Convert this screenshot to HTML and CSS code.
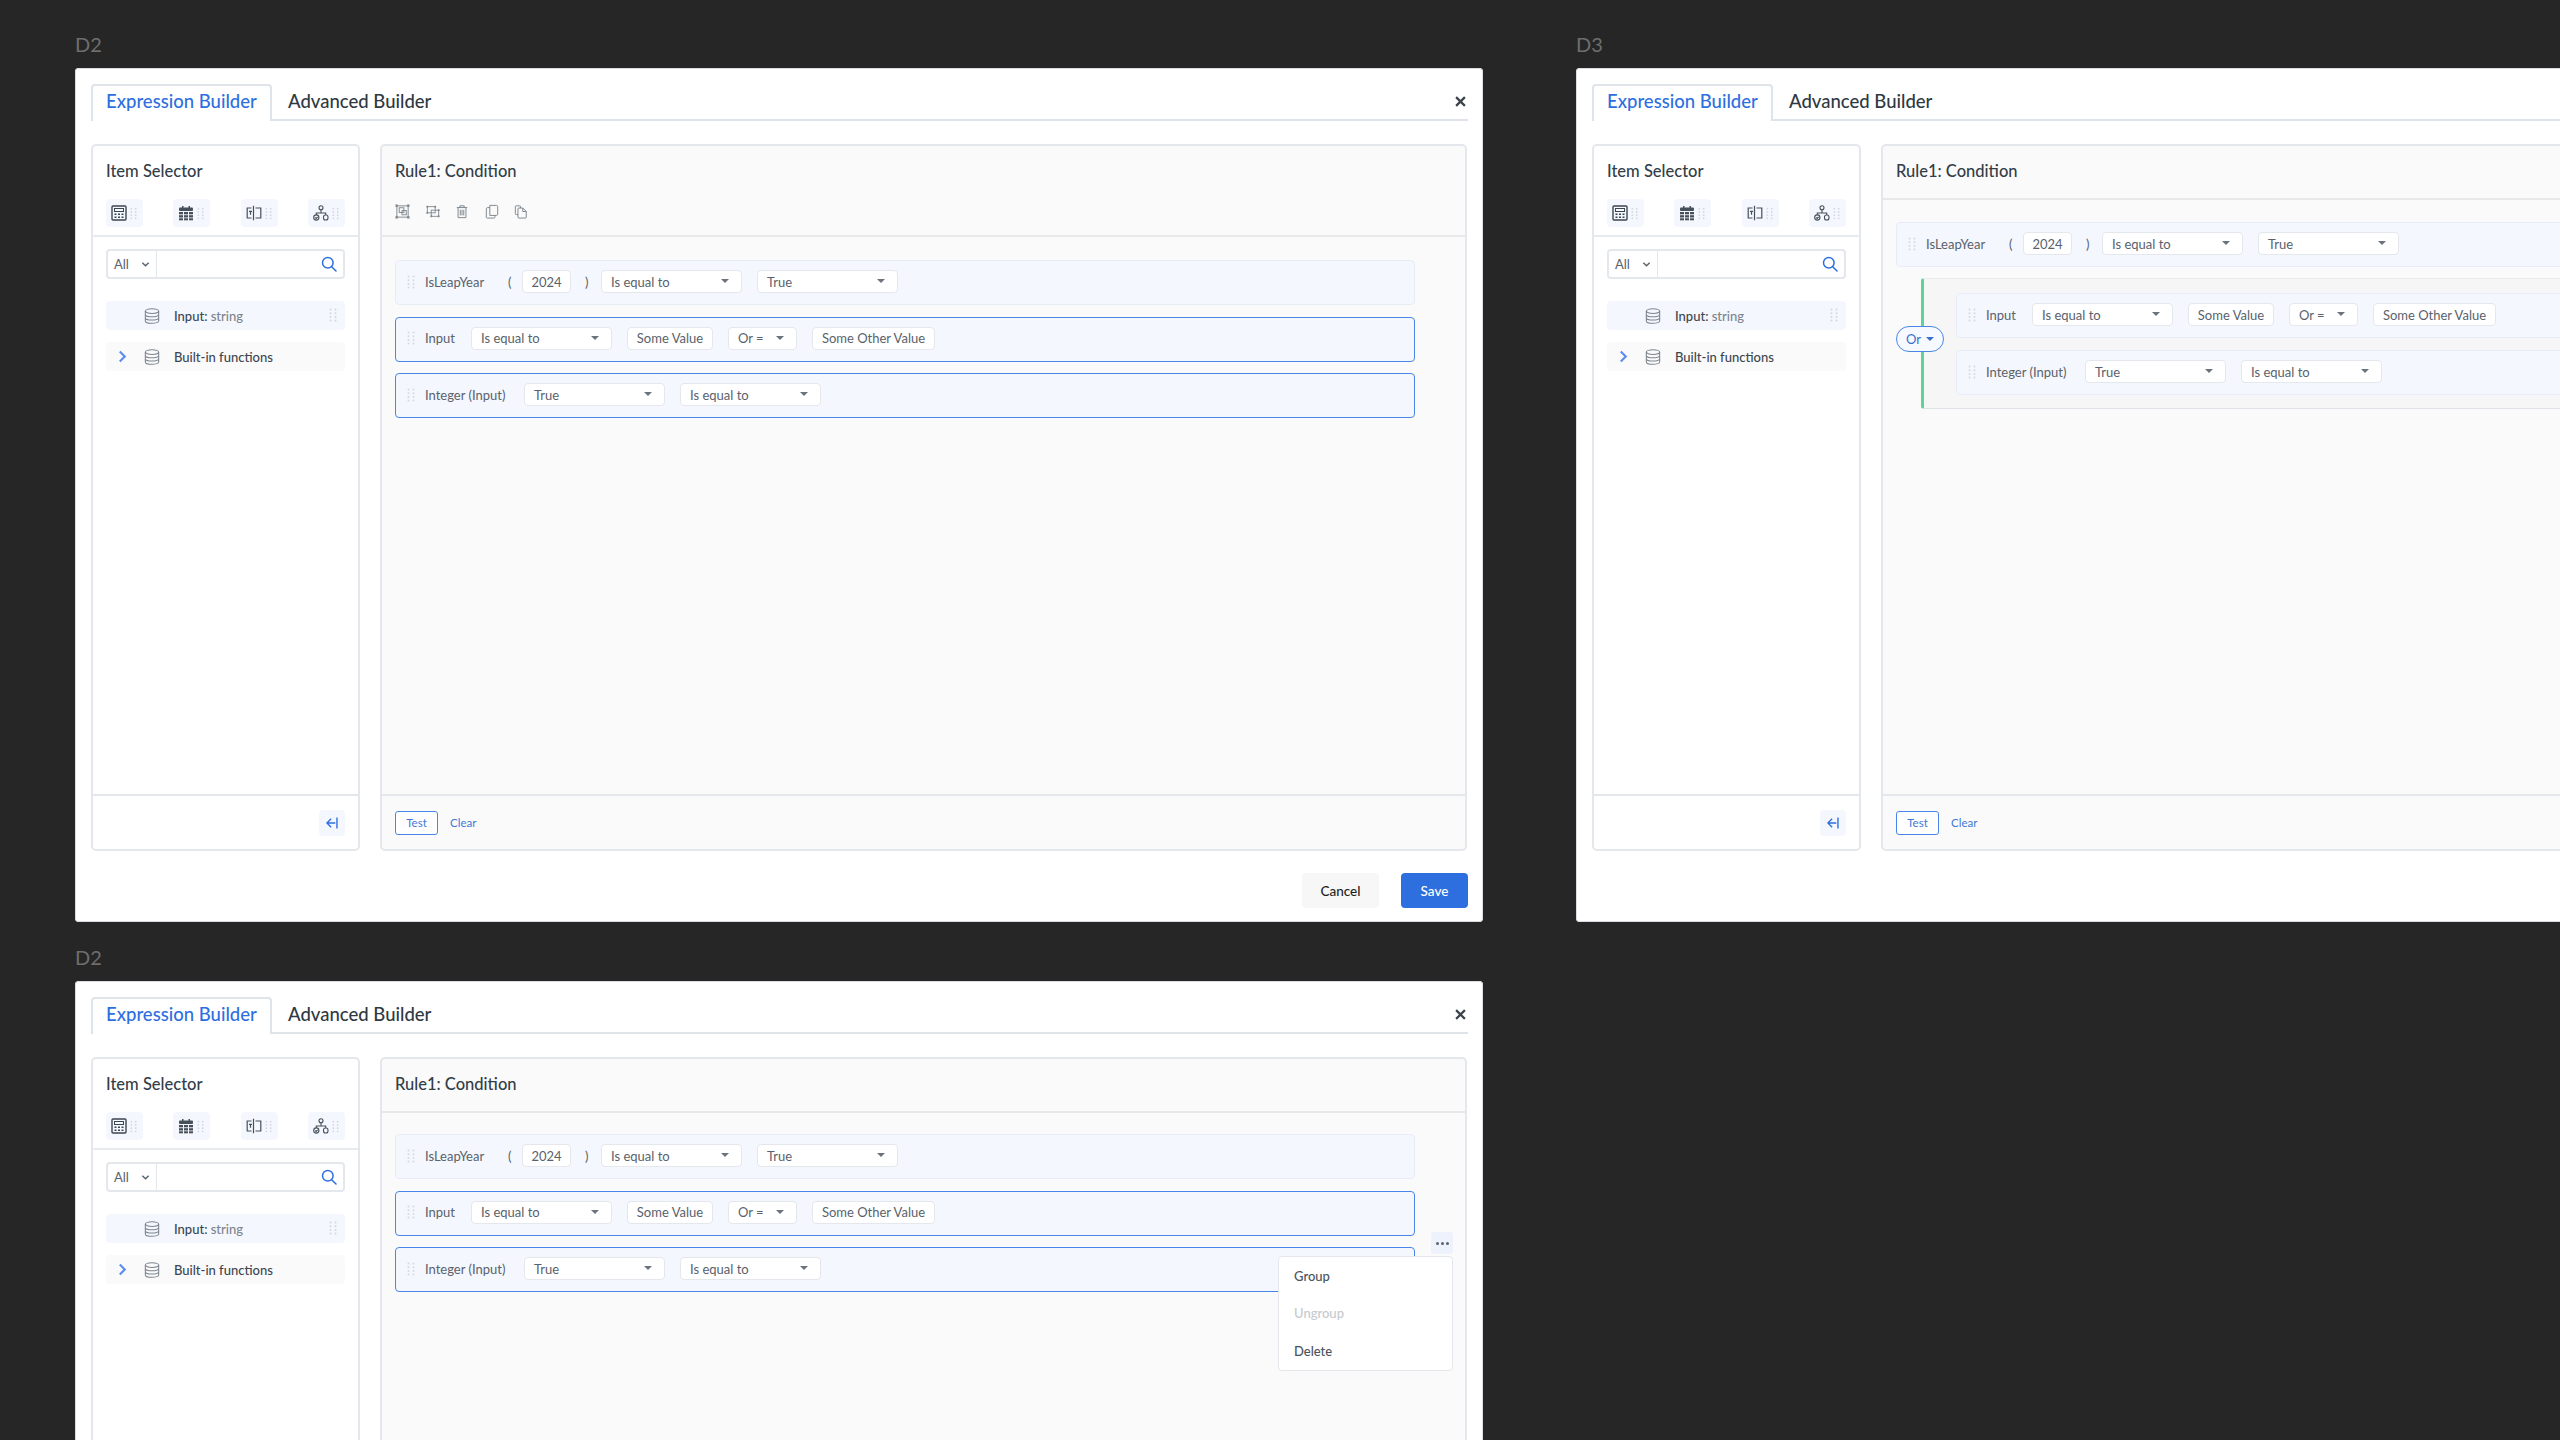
FILE: index.html
```html
<!DOCTYPE html>
<html lang="en">
<head>
<meta charset="utf-8">
<title>Expression Builder</title>
<link rel="stylesheet" href="styles.css">
</head>
<body>
<svg class="defs" width="0" height="0" aria-hidden="true">
  <defs>
    <symbol id="grip" viewBox="0 0 8 14"><g fill="#d4d8de"><circle cx="1.5" cy="1.5" r="1"/><circle cx="6.5" cy="1.5" r="1"/><circle cx="1.5" cy="5.2" r="1"/><circle cx="6.5" cy="5.2" r="1"/><circle cx="1.5" cy="8.9" r="1"/><circle cx="6.5" cy="8.9" r="1"/><circle cx="1.5" cy="12.5" r="1"/><circle cx="6.5" cy="12.5" r="1"/></g></symbol>
    <symbol id="db" viewBox="0 0 18 18"><g fill="none" stroke="#7d858e" stroke-width="1.2"><ellipse cx="9" cy="3.5" rx="7.5" ry="2.6"/><path d="M1.5 3.5v11c0 1.5 3.4 2.6 7.5 2.6s7.5-1.100 7.500-2.600v-11M1.500 7.300c0 1.500 3.400 2.600 7.500 2.600s7.500-1.100 7.500-2.600M1.500 11c0 1.500 3.400 2.600 7.500 2.600s7.500-1.100 7.500-2.600"/></g></symbol>
    <symbol id="calc" viewBox="0 0 16 16"><rect x="1" y="1" width="14" height="14" rx="1" fill="none" stroke="#3c4650" stroke-width="1.4"/><rect x="3.500" y="3.500" width="9" height="3" fill="none" stroke="#3c4650"/><g fill="#3c4650"><rect x="3.500" y="8.500" width="2" height="1.500"/><rect x="7" y="8.500" width="2" height="1.500"/><rect x="10.500" y="8.500" width="2" height="1.500"/><rect x="3.500" y="11.500" width="2" height="1.500"/><rect x="7" y="11.500" width="2" height="1.500"/><rect x="10.500" y="11.500" width="2" height="1.500"/></g></symbol>
    <symbol id="cal" viewBox="0 0 16 16"><g fill="#46505a"><rect x="1" y="2.500" width="14" height="3.500" rx="1"/><rect x="4" y="1" width="1.500" height="2.500"/><rect x="10.500" y="1" width="1.500" height="2.500"/><rect x="1" y="7" width="4" height="2.300"/><rect x="6" y="7" width="4" height="2.300"/><rect x="11" y="7" width="4" height="2.300"/><rect x="1" y="10.200" width="4" height="2.300"/><rect x="6" y="10.200" width="4" height="2.300"/><rect x="11" y="10.200" width="4" height="2.300"/><rect x="1" y="13.300" width="4" height="2"/><rect x="6" y="13.300" width="4" height="2"/><rect x="11" y="13.300" width="4" height="2"/></g></symbol>
    <symbol id="panel" viewBox="0 0 16 16"><g fill="none" stroke="#46505a" stroke-width="1.200"><path d="M5.500 3H1.200v10h4.300M7.500 .8v14.400M9.500 3h5.300v10H9.500"/><path d="M3 6.300h3M4.500 6.300v3.500"/></g></symbol>
    <symbol id="flow" viewBox="0 0 16 16"><g fill="none" stroke="#46505a" stroke-width="1.100"><circle cx="8" cy="2.800" r="2"/><circle cx="3.300" cy="12.500" r="2.600"/><rect x="10.500" y="10" width="4.500" height="5" rx="2"/><path d="M8 5v3M3.300 9.900V8h9.400v2"/><path d="M2.200 12.500l1 1 1.400-1.700"/></g></symbol>
    <symbol id="t-group" viewBox="0 0 16 16"><g fill="none" stroke="#7d858e" stroke-width="1"><rect x="2" y="2" width="12" height="12"/><rect x="4.500" y="4" width="5" height="5"/><rect x="7.500" y="7" width="4.500" height="4.500"/></g><g fill="#7d858e"><rect x=".5" y=".5" width="2.500" height="2.500"/><rect x="13" y=".5" width="2.500" height="2.500"/><rect x=".5" y="13" width="2.500" height="2.500"/><rect x="13" y="13" width="2.500" height="2.500"/></g></symbol>
    <symbol id="t-ungroup" viewBox="0 0 16 16"><g fill="none" stroke="#7d858e" stroke-width="1"><rect x="1.500" y="2.500" width="9" height="7"/><rect x="6" y="6.500" width="8.500" height="7"/></g><g fill="#7d858e"><rect x=".5" y="1.500" width="2" height="2"/><rect x="9.500" y="1.500" width="2" height="2"/><rect x=".5" y="8.500" width="2" height="2"/><rect x="13.500" y="5.500" width="2" height="2"/><rect x="5" y="12.500" width="2" height="2"/><rect x="13.500" y="12.500" width="2" height="2"/></g></symbol>
    <symbol id="t-trash" viewBox="0 0 16 16"><g fill="none" stroke="#7d858e" stroke-width="1.100"><path d="M2 3.500h12M5.500 3.500V1.500h5v2M3.500 3.500v11.500h9V3.500M6 6v6.500M8 6v6.500M10 6v6.500"/></g></symbol>
    <symbol id="t-copy" viewBox="0 0 16 16"><g fill="none" stroke="#7d858e" stroke-width="1.100"><path d="M5.500 1h7.500a1.500 1.500 0 0 1 1.500 1.500v8.500a1.500 1.500 0 0 1-1.500 1.500"/><path d="M5.500 1v11.500h7.500M5.500 3.500H3A1.500 1.500 0 0 0 1.500 5v9.500A1 1 0 0 0 3 15.500h7a1.500 1.500 0 0 0 1.500-1.500v-1.500"/></g></symbol>
    <symbol id="t-paste" viewBox="0 0 16 16"><g fill="none" stroke="#7d858e" stroke-width="1.100"><path d="M4.500 11.500H2.500A1 1 0 0 1 1.500 10.500V2.500A1 1 0 0 1 2.500 1.500h4a1 1 0 0 1 1 1v1.500"/><path d="M4.500 5a1 1 0 0 1 1-1H10l4 4v6.500a1 1 0 0 1-1 1H5.500a1 1 0 0 1-1-1zM10 4v4h4"/></g></symbol>
    <symbol id="search" viewBox="0 0 16 16"><g fill="none" stroke="#2e6fe0" stroke-width="1.500"><circle cx="6.800" cy="6.800" r="5.300"/><path d="M10.700 10.700l4.300 4.300" stroke-linecap="round"/></g></symbol>
    <symbol id="chev" viewBox="0 0 10 10"><path d="M1.500 3l3.500 3.500L8.500 3" fill="none" stroke="#59626c" stroke-width="1.600"/></symbol>
    <symbol id="right" viewBox="0 0 10 14"><path d="M2 1.500L7.500 7 2 12.500" fill="none" stroke="#5c8df0" stroke-width="2.400"/></symbol>
    <symbol id="collapse" viewBox="0 0 14 12"><g fill="none" stroke="#2e6fe0" stroke-width="1.500"><path d="M11.800 0v12M10 6H1.200M5.500 1.500L1 6l4.500 4.500"/></g></symbol>
    <symbol id="close" viewBox="0 0 10 10"><path d="M1 1l8 8M9 1l-8 8" stroke="#3a424b" stroke-width="2" fill="none"/></symbol>
  </defs>
</svg>

<main class="canvas">
  <section class="frame frame-a">
    <p class="frame-label">D2</p>
    <article class="modal">
      <header class="tabs">
        <span class="tab tab-active">Expression Builder</span>
        <span class="tab">Advanced Builder</span>
        <svg class="close"><use href="#close"/></svg>
      </header>
      <div class="body">
        <aside class="panel selector">
          <h2 class="title">Item Selector</h2>
          <div class="tools">
            <span class="tool"><svg class="tool-ic"><use href="#calc"/></svg><svg class="grip"><use href="#grip"/></svg></span>
            <span class="tool"><svg class="tool-ic"><use href="#cal"/></svg><svg class="grip"><use href="#grip"/></svg></span>
            <span class="tool"><svg class="tool-ic"><use href="#panel"/></svg><svg class="grip"><use href="#grip"/></svg></span>
            <span class="tool"><svg class="tool-ic"><use href="#flow"/></svg><svg class="grip"><use href="#grip"/></svg></span>
          </div>
          <div class="search">
            <span class="search-all">All<svg class="chev"><use href="#chev"/></svg></span>
            <span class="search-field"><svg class="search-ic"><use href="#search"/></svg></span>
          </div>
          <ul class="items">
            <li class="item item-input"><svg class="db"><use href="#db"/></svg><span>Input: <em>string</em></span><svg class="grip item-grip"><use href="#grip"/></svg></li>
            <li class="item"><svg class="arrow"><use href="#right"/></svg><svg class="db"><use href="#db"/></svg><span>Built-in functions</span></li>
          </ul>
          <footer class="foot foot-end"><span class="collapse"><svg class="collapse-ic"><use href="#collapse"/></svg></span></footer>
        </aside>
        <div class="panel editor">
          <h2 class="title">Rule1: Condition</h2>
          <div class="actions">
            <svg class="act act-lg"><use href="#t-group"/></svg>
            <svg class="act"><use href="#t-ungroup"/></svg>
            <svg class="act"><use href="#t-trash"/></svg>
            <svg class="act"><use href="#t-copy"/></svg>
            <svg class="act"><use href="#t-paste"/></svg>
          </div>
          <div class="rules">
            <div class="rule">
              <svg class="grip"><use href="#grip"/></svg>
              <span class="lbl lbl-leap">IsLeapYear</span><span class="paren">(</span><span class="chip chip-year">2024</span><span class="paren paren-close">)</span>
              <span class="chip dd dd-m">Is equal to</span><span class="chip dd dd-m">True</span>
            </div>
            <div class="rule rule-sel">
              <svg class="grip"><use href="#grip"/></svg>
              <span class="lbl lbl-input">Input</span>
              <span class="chip dd dd-m">Is equal to</span><span class="chip chip-val">Some Value</span><span class="chip dd dd-s">Or =</span><span class="chip chip-other">Some Other Value</span>
            </div>
            <div class="rule rule-sel">
              <svg class="grip"><use href="#grip"/></svg>
              <span class="lbl lbl-int">Integer (Input)</span>
              <span class="chip dd dd-m">True</span><span class="chip dd dd-m">Is equal to</span>
            </div>
          </div>
          <footer class="foot"><span class="btn-test">Test</span><span class="btn-clear">Clear</span></footer>
        </div>
      </div>
      <footer class="modal-foot"><span class="btn btn-cancel">Cancel</span><span class="btn btn-save">Save</span></footer>
    </article>
  </section>

  <section class="frame frame-b">
    <p class="frame-label">D3</p>
    <article class="modal modal-wide">
      <header class="tabs">
        <span class="tab tab-active">Expression Builder</span>
        <span class="tab">Advanced Builder</span>
      </header>
      <div class="body">
        <aside class="panel selector">
          <h2 class="title">Item Selector</h2>
          <div class="tools">
            <span class="tool"><svg class="tool-ic"><use href="#calc"/></svg><svg class="grip"><use href="#grip"/></svg></span>
            <span class="tool"><svg class="tool-ic"><use href="#cal"/></svg><svg class="grip"><use href="#grip"/></svg></span>
            <span class="tool"><svg class="tool-ic"><use href="#panel"/></svg><svg class="grip"><use href="#grip"/></svg></span>
            <span class="tool"><svg class="tool-ic"><use href="#flow"/></svg><svg class="grip"><use href="#grip"/></svg></span>
          </div>
          <div class="search">
            <span class="search-all">All<svg class="chev"><use href="#chev"/></svg></span>
            <span class="search-field"><svg class="search-ic"><use href="#search"/></svg></span>
          </div>
          <ul class="items">
            <li class="item item-input"><svg class="db"><use href="#db"/></svg><span>Input: <em>string</em></span><svg class="grip item-grip"><use href="#grip"/></svg></li>
            <li class="item"><svg class="arrow"><use href="#right"/></svg><svg class="db"><use href="#db"/></svg><span>Built-in functions</span></li>
          </ul>
          <footer class="foot foot-end"><span class="collapse"><svg class="collapse-ic"><use href="#collapse"/></svg></span></footer>
        </aside>
        <div class="panel editor">
          <h2 class="title title-rule">Rule1: Condition</h2>
          <div class="rules rules-d3">
            <div class="rule rule-wide">
              <svg class="grip"><use href="#grip"/></svg>
              <span class="lbl lbl-leap">IsLeapYear</span><span class="paren">(</span><span class="chip chip-year">2024</span><span class="paren paren-close">)</span>
              <span class="chip dd dd-m">Is equal to</span><span class="chip dd dd-m">True</span>
            </div>
            <div class="group">
              <span class="or-pill">Or<i class="caret"></i></span>
              <div class="rule rule-wide">
                <svg class="grip"><use href="#grip"/></svg>
                <span class="lbl lbl-input">Input</span>
                <span class="chip dd dd-m">Is equal to</span><span class="chip chip-val">Some Value</span><span class="chip dd dd-s">Or =</span><span class="chip chip-other">Some Other Value</span>
              </div>
              <div class="rule rule-wide">
                <svg class="grip"><use href="#grip"/></svg>
                <span class="lbl lbl-int">Integer (Input)</span>
                <span class="chip dd dd-m">True</span><span class="chip dd dd-m">Is equal to</span>
              </div>
            </div>
          </div>
          <footer class="foot"><span class="btn-test">Test</span><span class="btn-clear">Clear</span></footer>
        </div>
      </div>
    </article>
  </section>

  <section class="frame frame-c">
    <p class="frame-label">D2</p>
    <article class="modal">
      <header class="tabs">
        <span class="tab tab-active">Expression Builder</span>
        <span class="tab">Advanced Builder</span>
        <svg class="close"><use href="#close"/></svg>
      </header>
      <div class="body">
        <aside class="panel selector">
          <h2 class="title">Item Selector</h2>
          <div class="tools">
            <span class="tool"><svg class="tool-ic"><use href="#calc"/></svg><svg class="grip"><use href="#grip"/></svg></span>
            <span class="tool"><svg class="tool-ic"><use href="#cal"/></svg><svg class="grip"><use href="#grip"/></svg></span>
            <span class="tool"><svg class="tool-ic"><use href="#panel"/></svg><svg class="grip"><use href="#grip"/></svg></span>
            <span class="tool"><svg class="tool-ic"><use href="#flow"/></svg><svg class="grip"><use href="#grip"/></svg></span>
          </div>
          <div class="search">
            <span class="search-all">All<svg class="chev"><use href="#chev"/></svg></span>
            <span class="search-field"><svg class="search-ic"><use href="#search"/></svg></span>
          </div>
          <ul class="items">
            <li class="item item-input"><svg class="db"><use href="#db"/></svg><span>Input: <em>string</em></span><svg class="grip item-grip"><use href="#grip"/></svg></li>
            <li class="item"><svg class="arrow"><use href="#right"/></svg><svg class="db"><use href="#db"/></svg><span>Built-in functions</span></li>
          </ul>
        </aside>
        <div class="panel editor">
          <h2 class="title title-rule">Rule1: Condition</h2>
          <div class="rules rules-c">
            <div class="rule">
              <svg class="grip"><use href="#grip"/></svg>
              <span class="lbl lbl-leap">IsLeapYear</span><span class="paren">(</span><span class="chip chip-year">2024</span><span class="paren paren-close">)</span>
              <span class="chip dd dd-m">Is equal to</span><span class="chip dd dd-m">True</span>
            </div>
            <div class="rule rule-sel">
              <svg class="grip"><use href="#grip"/></svg>
              <span class="lbl lbl-input">Input</span>
              <span class="chip dd dd-m">Is equal to</span><span class="chip chip-val">Some Value</span><span class="chip dd dd-s">Or =</span><span class="chip chip-other">Some Other Value</span>
            </div>
            <div class="rule rule-sel">
              <svg class="grip"><use href="#grip"/></svg>
              <span class="lbl lbl-int">Integer (Input)</span>
              <span class="chip dd dd-m">True</span><span class="chip dd dd-m">Is equal to</span>
            </div>
          </div>
          <span class="more"><i></i><i></i><i></i></span>
          <ul class="menu">
            <li>Group</li>
            <li class="menu-off">Ungroup</li>
            <li>Delete</li>
          </ul>
        </div>
      </div>
    </article>
  </section>
</main>
</body>
</html>
```

FILE: styles.css
```css
* { box-sizing: border-box; }
html, body { margin: 0; padding: 0; }
body {
  width: 2560px;
  height: 1440px;
  overflow: hidden;
  background: #262626;
  font-family: "Lato", "Noto Sans", sans-serif;
  color: #3c4650;
}
.defs { position: absolute; }
ul { list-style: none; margin: 0; padding: 0; }
h2, p { margin: 0; }
em { font-style: normal; color: #7d858e; }

.canvas { position: relative; width: 2560px; height: 1440px; overflow: hidden; }
.frame { position: absolute; }
.frame-a { left: 75px; top: 32px; width: 1408px; }
.frame-b { left: 1576px; top: 32px; width: 1408px; }
.frame-c { left: 75px; top: 945px; width: 1408px; }
.frame-label { height: 36px; font-size: 20px; line-height: 24px; color: #6e6e6e; }

.modal {
  background: #fff;
  border-radius: 4px;
  padding: 16px 15px 0 16px;
  height: 854px;
  box-shadow: inset 0 0 0 1px #d9dde2;
}
.tabs {
  display: flex;
  align-items: flex-end;
  height: 37px;
  border-bottom: 2px solid #dfe4ea;
  position: relative;
}
.tab {
  height: 35px;
  padding: 0 16px;
  font-size: 18.500px;
  font-weight: 500;
  line-height: 35px;
  color: #2f3943;
  white-space: nowrap;
}
.tab-active {
  width: 181px;
  height: 37px;
  margin-bottom: -2px;
  background: #fff;
  color: #2e6fe0;
  border: 2px solid #dfe4ea;
  border-bottom: 0;
  border-radius: 4px 4px 0 0;
  padding: 0 13px;
  line-height: 31px;
}
.close { position: absolute; right: 2px; top: 12px; width: 11px; height: 11px; }

.body { display: flex; gap: 20px; margin-top: 23px; height: 707px; }
.panel {
  display: flex;
  flex-direction: column;
  flex: none;
  border: 2px solid #e4e7eb;
  border-radius: 5px;
}
.selector { width: 269px; background: #fff; }
.editor { width: 1087px; background: #fafafa; position: relative; }
.modal-wide { width: 1408px; }
.title {
  height: 50px;
  padding: 13px 13px 0;
  font-size: 16.500px;
  font-weight: 500;
  line-height: 24px;
  color: #333d47;
  flex: none;
}
.title-rule { height: 54px; border-bottom: 2px solid #e8e8e8; }

.tools {
  display: flex;
  align-items: center;
  justify-content: space-between;
  padding: 4px 13px 9px;
  height: 41px;
  border-bottom: 2px solid #e8ebee;
}
.tool {
  display: flex;
  align-items: center;
  gap: 3px;
  width: 37px;
  height: 28px;
  padding-left: 5px;
  background: #f4f7fd;
  border-radius: 4px;
}
.tool-ic { width: 16px; height: 16px; }
.grip { width: 8px; height: 14px; flex: none; }
.tool .grip { width: 7px; height: 13px; }

.search {
  display: flex;
  height: 30px;
  margin: 12px 13px 0;
  border: 2px solid #e4e7eb;
  border-radius: 4px;
  font-size: 13px;
  color: #59626c;
}
.search-all {
  display: flex;
  align-items: center;
  justify-content: space-between;
  width: 49px;
  padding: 0 6px;
  border-right: 1.500px solid #e4e7eb;
}
.chev { width: 9px; height: 9px; }
.search-field { flex: 1; display: flex; align-items: center; justify-content: flex-end; padding-right: 6px; }
.search-ic { width: 16px; height: 16px; }

.items { display: flex; flex-direction: column; gap: 12px; margin: 22px 13px 0; flex: 1; }
.item {
  position: relative;
  display: flex;
  align-items: center;
  height: 29px;
  padding-left: 38px;
  gap: 14px;
  background: #fafafa;
  border-radius: 4px;
  font-size: 13px;
  font-weight: 500;
  color: #3c4650;
}
.item-input { background: #f4f7fd; }
.db { width: 16px; height: 16px; flex: none; }
.arrow { position: absolute; left: 12px; top: 8px; width: 9px; height: 13px; }
.item-grip { position: absolute; right: 8px; top: 7px; }

.foot {
  display: flex;
  align-items: center;
  height: 55px;
  flex: none;
  padding: 0 13px;
  gap: 12px;
  border-top: 2px solid #e4e7eb;
}
.foot-end { justify-content: flex-end; }
.collapse {
  display: flex;
  align-items: center;
  justify-content: center;
  width: 26px;
  height: 26px;
  background: #f4f7fd;
  border-radius: 4px;
}
.collapse-ic { width: 13px; height: 12px; }

.actions {
  display: flex;
  align-items: center;
  gap: 15.500px;
  height: 41px;
  padding: 0 13px 9px;
  border-bottom: 2px solid #e8e8e8;
  flex: none;
  margin-bottom: 23px;
}
.act { width: 14px; height: 15px; flex: none; }
.act-lg { width: 15px; height: 15px; }

.rules { display: flex; flex-direction: column; gap: 11.500px; padding: 0 13px; flex: 1; }
.rules-d3 { padding-top: 22px; gap: 11px; }
.rules-c { padding-top: 21px; }

.rule {
  display: flex;
  align-items: center;
  width: 1020px;
  height: 45px;
  padding: 0 0 2px 11px;
  background: #f4f7fd;
  border: 1.500px solid #e7edf8;
  border-radius: 4px;
  font-size: 13px;
  color: #59626c;
  flex: none;
}
.rule-wide { width: 1240px; }
.rule-sel { border-color: #4a86e8; }
.rule .grip { margin-right: 10px; opacity: .9; }
.lbl { white-space: nowrap; }
.lbl-input { width: 46px; }
.lbl-int { width: 99px; }
.lbl-leap { width: 83px; }
.paren { width: 14px; }
.paren-close { width: 16px; }
.chip {
  display: inline-flex;
  align-items: center;
  height: 23px;
  padding: 0 9px;
  margin-right: 15px;
  background: #fff;
  border: 1.500px solid #e4e7eb;
  border-radius: 4px;
  font-size: 13px;
  white-space: nowrap;
  color: #59626c;
  position: relative;
}
.chip-year { width: 49px; justify-content: center; padding: 0; margin-right: 14px; }
.chip-val { width: 86px; justify-content: center; padding: 0; }
.chip-other { width: 123px; justify-content: center; padding: 0; }
.dd-m { width: 141px; }
.dd-s { width: 69px; }
.dd::after {
  content: "";
  position: absolute;
  right: 12px;
  top: 8px;
  border: 4px solid transparent;
  border-top: 4px solid #6b737c;
  border-bottom: 0;
}

.group {
  position: relative;
  display: flex;
  flex-direction: column;
  gap: 12px;
  width: 1310px;
  height: 131px;
  margin-left: 25px;
  padding: 14px 0 0 32px;
  background: #f6f6f6;
  border-left: 3px solid #5bd49a;
  border-top: 1.500px solid #ebebeb;
  border-bottom: 1.500px solid #dfe2e6;
  border-radius: 3px 0 0 3px;
}
.or-pill {
  position: absolute;
  left: -28px;
  top: 47px;
  display: flex;
  align-items: center;
  gap: 5px;
  width: 48px;
  height: 26px;
  padding-left: 9px;
  background: #f6f9ff;
  border: 1.500px solid #4a86e8;
  border-radius: 13px;
  font-size: 13px;
  color: #3a6fc9;
}
.caret { border: 4px solid transparent; border-top: 4px solid #3a6fc9; border-bottom: 0; }

.btn-test {
  display: flex;
  align-items: center;
  justify-content: center;
  width: 43px;
  height: 24px;
  border: 1.500px solid #4a86e8;
  border-radius: 3px;
  background: #fff;
  font-size: 11.500px;
  color: #3f78d8;
}
.btn-clear { font-size: 11.500px; color: #3f78d8; }

.modal-foot {
  display: flex;
  justify-content: flex-end;
  gap: 22px;
  margin-top: 22px;
}
.btn {
  display: flex;
  align-items: center;
  justify-content: center;
  height: 35px;
  border-radius: 4px;
  font-size: 13.500px;
  font-weight: 500;
}
.btn-cancel { width: 77px; background: #f7f7f7; color: #1f1f1f; }
.btn-save { width: 67px; background: #2e6fe0; color: #fff; }

.more {
  position: absolute;
  left: 1049px;
  top: 173px;
  display: flex;
  align-items: center;
  justify-content: center;
  gap: 2px;
  width: 22px;
  height: 22px;
  background: #eef2fc;
  border-radius: 3px;
}
.more i { width: 3px; height: 3px; border-radius: 50%; background: #5a6470; }
.menu {
  position: absolute;
  left: 896px;
  top: 197px;
  width: 175px;
  height: 115px;
  padding: 0 15px;
  display: flex;
  flex-direction: column;
  justify-content: space-around;
  background: #fff;
  border: 1.500px solid #e4e7eb;
  border-radius: 4px;
  font-size: 13px;
  font-weight: 500;
  color: #4a545e;
  z-index: 2;
}
.menu-off { color: #c6cad0; }
```
